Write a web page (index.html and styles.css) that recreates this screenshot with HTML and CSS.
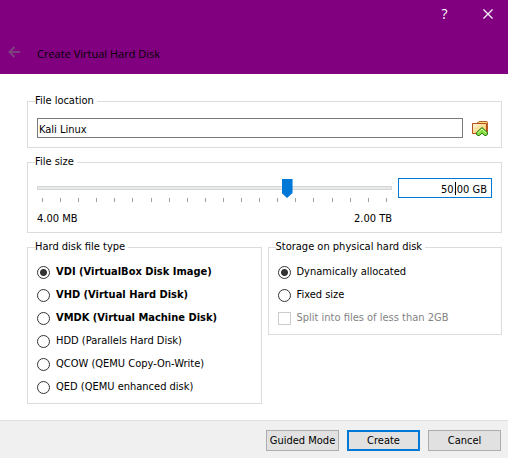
FILE: index.html
```html
<!DOCTYPE html>
<html lang="en">
<head>
<meta charset="utf-8">
<title>Create Virtual Hard Disk</title>
<link rel="stylesheet" href="styles.css">
</head>
<body>
<form class="wizard">
  <header class="banner">
    <div class="window-controls">
      <button type="button" class="caption-button caption-help" aria-label="Help">?</button>
      <button type="button" class="caption-button" aria-label="Close">
        <svg width="10" height="10" viewBox="0 0 10 10"><path d="M0.5 0.5l9 9M9.5 0.5l-9 9" stroke="#fff" stroke-width="1.2"/></svg>
      </button>
    </div>
    <div class="title-row">
      <button type="button" class="back" aria-label="Back" disabled>
        <svg width="13" height="12" viewBox="0 0 13 12"><path d="M12 6H1.500M6.500 1L1.500 6l5 5" fill="none" stroke="#804080" stroke-width="2"/></svg>
      </button>
      <h1 class="title">Create Virtual Hard Disk</h1>
    </div>
  </header>

  <main class="content">
    <fieldset class="group">
      <legend>File location</legend>
      <div class="location-row">
        <input type="text" class="field" value="Kali Linux" aria-label="File location">
        <button type="button" class="browse" aria-label="Choose a location">
          <svg width="16" height="16" viewBox="0 0 16 16">
            <defs><linearGradient id="folder" x1="0" y1="0" x2="1" y2="1"><stop offset="0" stop-color="#fffbe0"/><stop offset="1" stop-color="#f5c04c"/></linearGradient></defs>
            <path d="M5.500 3V1.500h1l.5-1h8l.5 1V11h-9z" fill="#fbdc84" stroke="#b4622a"/>
            <path d="M.5 2.500h14v10H.5z" fill="url(#folder)" stroke="#b9501c"/>
            <path d="M10 6.500l5.500 5v2l-1.500 1h-1.500L10 12.200 7.500 14.500H6l-1.500-1v-2z" fill="#84dc3c" stroke="#287818"/>
            <path d="M10 8l-4 3.800M10 8l4 3.800" fill="none" stroke="#d8f8a8"/>
          </svg>
        </button>
      </div>
    </fieldset>

    <fieldset class="group group-size">
      <legend>File size</legend>
      <div class="size-row">
        <div class="scale">
          <input type="range" class="slider" min="0" max="344" value="245" aria-label="File size">
          <div class="ticks">
            <i></i><i></i><i></i><i></i><i></i><i></i><i></i><i></i><i></i><i></i><i></i><i></i><i></i><i></i><i></i><i></i><i></i><i></i><i></i><i></i>
          </div>
          <div class="limits"><span>4.00 MB</span><span>2.00 TB</span></div>
        </div>
        <div class="amount">
          <input type="text" class="field field-active" value="50.00 GB" aria-label="Size">
          <span class="caret"></span>
        </div>
      </div>
    </fieldset>

    <div class="columns">
      <fieldset class="group">
        <legend>Hard disk file type</legend>
        <div class="options">
          <label class="option option-main"><input type="radio" name="type" checked>VDI (VirtualBox Disk Image)</label>
          <label class="option option-main"><input type="radio" name="type">VHD (Virtual Hard Disk)</label>
          <label class="option option-main"><input type="radio" name="type">VMDK (Virtual Machine Disk)</label>
          <label class="option"><input type="radio" name="type">HDD (Parallels Hard Disk)</label>
          <label class="option"><input type="radio" name="type">QCOW (QEMU Copy-On-Write)</label>
          <label class="option"><input type="radio" name="type">QED (QEMU enhanced disk)</label>
        </div>
      </fieldset>
      <fieldset class="group">
        <legend>Storage on physical hard disk</legend>
        <div class="options">
          <label class="option"><input type="radio" name="storage" checked>Dynamically allocated</label>
          <label class="option"><input type="radio" name="storage">Fixed size</label>
          <label class="option option-disabled"><input type="checkbox" disabled>Split into files of less than 2GB</label>
        </div>
      </fieldset>
    </div>
  </main>

  <footer class="actions">
    <button type="button" class="action">Guided Mode</button>
    <button type="button" class="action action-default">Create</button>
    <button type="button" class="action">Cancel</button>
  </footer>
</form>
</body>
</html>
```
FILE: styles.css
```css
* {
  box-sizing: border-box;
}

body {
  margin: 0;
  background: #fff;
  color: #000;
  font: 11px/14px Tahoma, "DejaVu Sans Condensed", "DejaVu Sans", sans-serif;
}

button,
input {
  margin: 0;
  padding: 0;
  font: inherit;
  color: inherit;
}

svg {
  display: block;
}

.wizard {
  display: flex;
  flex-direction: column;
  min-height: 100vh;
}

.banner {
  background: #800080;
  padding-bottom: 8px;
}

.window-controls {
  display: flex;
  justify-content: flex-end;
  height: 28px;
}

.caption-button {
  display: flex;
  align-items: center;
  justify-content: center;
  width: 45px;
  border: 0;
  background: none;
  color: #fff;
}

.caption-button:last-child {
  width: 41px;
}

.caption-help {
  font: 14px/28px "Open Sans", sans-serif;
}

.title-row {
  display: flex;
  align-items: center;
  gap: 16px;
  height: 38px;
  padding: 14px 8px 0;
}

.back {
  padding: 0 0 4px;
  border: 0;
  background: none;
}

.title {
  margin: 0;
  font: 11px/16px "Segoe UI", "Open Sans", sans-serif;
}

.content {
  flex: 1;
  display: flex;
  flex-direction: column;
  gap: 7px;
  padding: 20px 6px 16px 27px;
}

.group {
  min-width: 0;
  margin: 0;
  padding: 9px;
  border: 1px solid #dcdcdc;
}

.group-size {
  padding-bottom: 6px;
}

.group legend {
  margin-left: -2px;
  padding: 0 3px 0 0;
}

.field {
  width: 100%;
  height: 20px;
  padding: 2px 1px 0;
  border: 1px solid #7a7a7a;
  border-radius: 0;
  background: #fff;
  outline: 0;
}

.field-active {
  padding-right: 4px;
  border-color: #0078d7;
  text-align: right;
}

.location-row {
  display: flex;
  align-items: center;
  gap: 9px;
  padding-top: 1px;
}

.browse {
  padding: 2px 4px 0 0;
  border: 0;
  background: none;
}

.size-row {
  display: flex;
  align-items: flex-start;
  gap: 6px;
}

.scale {
  flex: 1;
}

.slider {
  appearance: none;
  display: block;
  width: 100%;
  height: 20px;
  background: none;
}

.slider::-webkit-slider-runnable-track {
  height: 4px;
  border: 1px solid #d6d6d6;
  background: #e7eaea;
}

.slider::-webkit-slider-thumb {
  appearance: none;
  width: 11px;
  height: 19px;
  margin-top: -8px;
  background: #0078d7;
  clip-path: polygon(0 0, 100% 0, 100% 14px, 50% 100%, 0 14px);
}

.ticks {
  display: flex;
  justify-content: space-between;
  height: 4px;
  padding: 0 5px;
}

.ticks i {
  width: 1px;
  height: 4px;
  background: #a0a090;
}

.limits {
  display: flex;
  justify-content: space-between;
  padding-top: 10px;
}

.amount {
  position: relative;
  width: 94px;
}

.caret {
  position: absolute;
  top: 4px;
  right: 36px;
  width: 1px;
  height: 13px;
  background: #000;
}

.columns {
  display: grid;
  grid-template-columns: 1fr 1fr;
  gap: 6px;
  align-items: start;
}

.options {
  display: grid;
  gap: 9px;
  padding-top: 2px;
}

.option {
  display: flex;
  align-items: center;
  gap: 6px;
  white-space: nowrap;
}

.option-main {
  font-weight: bold;
}

.option-disabled {
  color: #838383;
}

.option input {
  appearance: none;
  flex: none;
  width: 13px;
  height: 13px;
  border: 1px solid #333;
  background: #fff;
}

.option input[type="radio"] {
  border-radius: 50%;
}

.option input[type="radio"]:checked {
  background: radial-gradient(circle, #333 3px, #fff 4px);
}

.option input:disabled {
  border-color: #ccc;
}

.actions {
  display: flex;
  justify-content: flex-end;
  gap: 8px;
  padding: 9px 7px 7px;
  border-top: 1px solid #dfdfdf;
  background: #f0f0f0;
}

.action {
  width: 73px;
  height: 21px;
  border: 1px solid #adadad;
  background: #e1e1e1;
  white-space: nowrap;
}

.action-default {
  border: 2px solid #0078d7;
}
```
